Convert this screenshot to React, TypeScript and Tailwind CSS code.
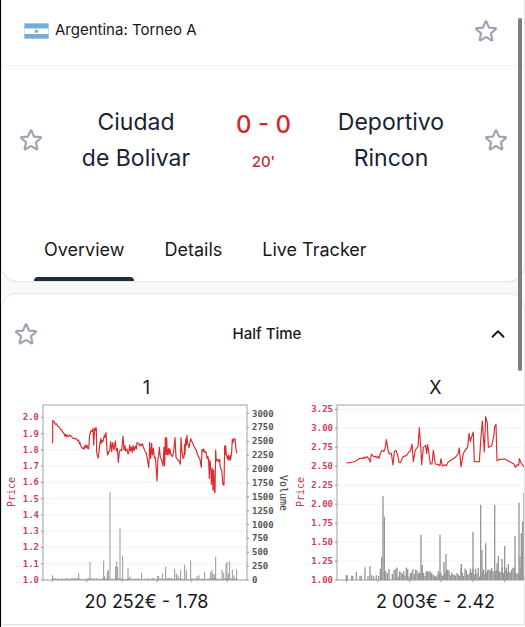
import { useState } from 'react';
import { ChevronUp } from 'lucide-react';

type Market = {
  id: string;
  label: string;
  summary: string;
  plotLeft: number;
  priceTicks: string[];
  volumeTicks: number[];
  priceTop: number;
  priceStep: number;
  timeTicks: number[];
  price: string;
  barWidth: number;
  bars: number[][];
  noise: { from: number; to: number; min: number; max: number; step: number };
};

const PLOT_W = 204;
const PLOT_H = 175;
const PLOT_TOP = 5;

// price and bars are in plot units (612 x 525), price is measured from the top
const markets: Market[] = [
  {
    id: 'home',
    label: '1',
    summary: '20 252€ - 1.78',
    plotLeft: 41,
    priceTicks: ['2.0', '1.9', '1.8', '1.7', '1.6', '1.5', '1.4', '1.3', '1.2', '1.1', '1.0'],
    volumeTicks: [3000, 2750, 2500, 2250, 2000, 1750, 1500, 1250, 1000, 750, 500, 250, 0],
    priceTop: 37,
    priceStep: 48.8,
    timeTicks: [27, 131, 237, 342, 446, 552],
    price:
      '27,115 29,111 29,47 32,48 37,58 40,56 44,63 48,65 52,73 56,74 59,81 63,85 65,93 68,88 70,96 72,90 77,95 80,90 84,93 88,98 92,101 98,100 104,107 107,105 109,117 111,113 114,124 119,131 122,128 124,132 126,120 129,128 132,120 134,130 137,131 140,90 143,80 145,77 147,79 150,70 152,120 155,70 157,76 159,68 160,72 161,140 163,152 166,159 170,120 173,101 175,115 177,106 180,110 184,90 186,97 189,83 192,135 194,150 197,140 200,138 203,110 206,140 209,113 213,135 217,108 220,138 223,130 226,172 229,140 232,135 236,137 240,93 243,135 246,122 248,138 252,132 255,147 258,140 260,120 262,138 265,126 268,142 270,122 273,137 277,123 280,132 282,113 287,115 290,122 292,118 296,122 298,116 301,126 306,138 310,145 314,168 317,187 319,152 320,111 323,160 326,115 328,150 331,130 334,158 337,157 340,193 342,228 345,160 347,150 349,127 352,157 356,165 360,183 363,127 365,183 367,98 369,148 371,98 373,150 377,130 378,150 381,132 383,147 388,155 392,140 396,98 399,157 405,165 408,168 412,178 414,98 417,140 420,160 423,156 425,118 426,148 428,102 430,120 432,91 434,115 438,128 443,101 447,110 450,117 455,128 460,136 464,150 468,158 471,163 475,187 477,133 480,140 482,132 485,142 489,140 492,160 495,155 497,170 499,220 501,165 504,200 505,238 508,190 510,255 512,195 514,258 516,263 518,135 520,168 524,163 527,170 530,163 532,188 536,195 540,240 543,240 545,123 547,148 548,122 550,150 554,162 556,150 558,166 561,152 563,165 566,140 568,102 570,112 573,102 576,101 578,125 580,138 582,145',
    barWidth: 3,
    bars: [
      [29, 14], [107, 21], [141, 54], [182, 58], [185, 12], [193, 25], [196, 30], [201, 264],
      [218, 40], [221, 55], [224, 40], [231, 156], [239, 73], [255, 36], [260, 10], [296, 22],
      [344, 12], [347, 12], [359, 20], [368, 40], [395, 34], [400, 20], [405, 14], [413, 30],
      [425, 46], [430, 30], [443, 58], [462, 12], [468, 14], [485, 25], [503, 25], [507, 30],
      [510, 20], [514, 16], [518, 70], [537, 30], [542, 22], [549, 50], [552, 54], [556, 20],
      [560, 56], [568, 32], [573, 14], [581, 32],
    ],
    noise: { from: 30, to: 584, min: 1, max: 6, step: 3 },
  },
  {
    id: 'draw',
    label: 'X',
    summary: '2 003€ - 2.42',
    plotLeft: 46,
    priceTicks: ['3.25', '3.00', '2.75', '2.50', '2.25', '2.00', '1.75', '1.50', '1.25', '1.00'],
    volumeTicks: [],
    priceTop: 13,
    priceStep: 56.9,
    timeTicks: [28, 122, 218, 312, 408, 503],
    price:
      '28,174 38,173 48,171 58,167 68,160 78,160 82,156 85,160 90,155 96,162 100,171 103,147 107,152 110,155 115,154 118,158 122,154 126,160 132,140 136,136 140,139 144,133 148,104 151,120 153,135 157,147 163,145 168,180 172,140 177,136 182,150 186,172 190,173 194,165 198,155 208,152 216,141 219,140 223,127 225,117 229,170 235,135 243,125 247,68 252,140 254,179 259,127 266,121 269,145 272,119 276,147 280,177 285,177 289,136 295,177 303,179 309,181 312,161 316,183 323,179 328,182 333,172 343,165 355,157 363,147 367,129 372,185 379,145 385,135 392,127 396,85 400,110 404,95 409,81 412,170 427,170 432,95 436,48 439,95 442,141 446,35 451,55 454,127 464,123 471,90 473,65 477,58 480,167 489,163 503,162 518,170 531,177 535,187 541,179 545,181 547,161 553,175 561,185 570,178',
    barWidth: 4,
    bars: [
      [28, 14], [31, 14], [44, 13], [47, 12], [58, 24], [69, 13], [73, 13], [84, 38], [93, 12],
      [99, 42], [104, 14], [110, 12], [118, 14], [125, 12], [130, 34], [134, 68], [138, 252],
      [142, 190], [146, 26], [151, 20], [156, 33], [166, 18], [171, 30], [252, 136], [256, 45],
      [309, 136], [321, 54], [327, 78], [373, 48], [408, 145], [431, 226], [435, 90], [446, 110],
      [473, 226], [480, 50], [484, 72], [495, 64], [503, 102], [514, 48], [534, 132], [546, 232],
      [549, 70], [553, 140], [557, 175], [561, 262],
    ],
    noise: { from: 176, to: 564, min: 10, max: 38, step: 4 },
  },
];

const tabs = ['Overview', 'Details', 'Live Tracker'];

const StarButton = ({ label }: { label: string }) => (
  <button type="button" aria-label={label} className="shrink-0 text-[#9fa3b3]">
    <svg
      viewBox="0 0 24 24"
      className="size-[26px]"
      fill="none"
      stroke="currentColor"
      strokeWidth="2"
      strokeLinecap="round"
      strokeLinejoin="round"
    >
      <path d="M11.48 3.5a.562.562 0 0 1 1.04 0l2.125 5.11a.563.563 0 0 0 .475.345l5.518.442c.499.04.701.663.321.988l-4.204 3.602a.563.563 0 0 0-.182.557l1.285 5.385a.562.562 0 0 1-.84.61l-4.725-2.885a.562.562 0 0 0-.586 0L6.982 20.54a.562.562 0 0 1-.84-.61l1.285-5.386a.562.562 0 0 0-.182-.557l-4.204-3.602a.562.562 0 0 1 .321-.988l5.518-.442a.563.563 0 0 0 .475-.345L11.48 3.5Z" />
    </svg>
  </button>
);

const Flag = () => (
  <svg viewBox="0 0 25 16" className="h-4 w-[25px]" aria-hidden="true">
    <rect width="25" height="16" rx="1" fill="#dcdff0" />
    <rect x="0.5" y="0.5" width="24" height="15" fill="#6fafd8" />
    <rect x="0.5" y="5.5" width="24" height="5.5" fill="#fff" />
    <circle cx="12.5" cy="8.3" r="1.8" fill="#e09a4a" />
  </svg>
);

// small volume bars between the big trades
const noiseBars = ({ from, to, min, max, step }: Market['noise']) => {
  const result: number[][] = [];
  for (let x = from; x < to; x += step) {
    const k = Math.abs(Math.sin(x * 12.9898) * 43758.5453) % 1;
    result.push([x, min + (max - min) * k]);
  }
  return result;
};

const MarketChart = ({ market }: { market: Market }) => {
  const { plotLeft, priceTicks, priceTop, priceStep, volumeTicks, timeTicks } = market;
  const right = plotLeft + PLOT_W;
  const bottom = PLOT_TOP + PLOT_H;
  const bars = [...market.bars, ...noiseBars(market.noise)];

  return (
    <svg viewBox="0 0 289 188" className="block h-[188px] w-[289px]" fontFamily="'DejaVu Sans Mono', monospace">
      {priceTicks.map((tick, i) => {
        const y = PLOT_TOP + (priceTop + priceStep * i) / 3;
        return (
          <g key={tick}>
            <line x1={plotLeft} x2={right} y1={y} y2={y} stroke="#e4e4e4" strokeWidth="0.7" strokeDasharray="2.5 1.5" />
            <line x1={plotLeft - 2} x2={plotLeft} y1={y} y2={y} stroke="#777" strokeWidth="0.8" />
            <text x={plotLeft - 4} y={y + 3} textAnchor="end" fontSize="9" fontWeight="bold" fill="#d0405a">
              {tick}
            </text>
          </g>
        );
      })}
      {volumeTicks.map((tick, i) => {
        const y = bottom - (volumeTicks.length - 1 - i) * 13.87;
        return (
          <g key={tick}>
            <line x1={right} x2={right + 2} y1={y} y2={y} stroke="#777" strokeWidth="0.8" />
            <text x={right + 5} y={y + 3} fontSize="9" fontWeight="bold" fill="#555">
              {tick}
            </text>
          </g>
        );
      })}
      <rect x={plotLeft} y={PLOT_TOP} width={PLOT_W} height={PLOT_H} fill="none" stroke="#8a8a8a" strokeWidth="0.8" />
      <svg x={plotLeft} y={PLOT_TOP} width={PLOT_W} height={PLOT_H + 3} viewBox="0 0 612 534">
        {timeTicks.map(x => (
          <line key={x} x1={x} x2={x} y1="525" y2="532" stroke="#777" strokeWidth="2" />
        ))}
        {bars.map(([x, h], i) => (
          <line key={i} x1={x} x2={x} y1="525" y2={525 - h} stroke="#979797" strokeWidth={market.barWidth} />
        ))}
        <polyline points={market.price} fill="none" stroke="#dc2a2e" strokeWidth="3.5" strokeLinejoin="round" />
      </svg>
      <text transform="translate(13 92) rotate(-90)" textAnchor="middle" fontSize="10" fill="#c9304a">
        Price
      </text>
      {volumeTicks.length > 0 && (
        <text transform={`translate(${right + 33} 93) rotate(90)`} textAnchor="middle" fontSize="10" fill="#333">
          Volume
        </text>
      )}
    </svg>
  );
};

export default function App() {
  const [activeTab, setActiveTab] = useState(tabs[0]);
  const [open, setOpen] = useState(true);

  return (
    <div className="relative min-h-screen overflow-hidden border-l border-black bg-[#f8f9fb] font-[Inter,sans-serif] text-[#17181c]">
      <section className="rounded-b-2xl border-x border-b border-[#e3e4e8] bg-white">
        <header className="flex h-[66px] items-center border-b border-[#f1f1f3] pr-[25px] pb-1 pl-[22px]">
          <Flag />
          <span className="ml-1.5 flex-1 text-[15px]">Argentina: Torneo A</span>
          <StarButton label="Add league to favourites" />
        </header>

        <div className="flex items-center py-[38px] pr-[15px] pl-4 text-[#1a1f36]">
          <StarButton label="Add Ciudad de Bolivar to favourites" />
          <h2 className="flex-1 px-2 text-center text-[23px] leading-9">Ciudad de&nbsp;Bolivar</h2>
          <div className="px-2 text-center font-medium text-[#cf2a2f]">
            <div className="text-2xl leading-9">0 - 0</div>
            <div className="pt-2 text-[15px]">20'</div>
          </div>
          <h2 className="flex-1 px-2 text-center text-[23px] leading-9">Deportivo Rincon</h2>
          <StarButton label="Add Deportivo Rincon to favourites" />
        </div>

        <nav className="flex gap-5 pl-8">
          {tabs.map(tab => (
            <button
              key={tab}
              type="button"
              onClick={() => setActiveTab(tab)}
              className="relative px-2.5 pt-6 pb-[19px] text-lg leading-6"
            >
              {tab}
              {activeTab === tab && <span className="absolute inset-x-0 bottom-0 h-1 rounded-t bg-[#222b3a]" />}
            </button>
          ))}
        </nav>
      </section>

      <section className="mt-[11px] rounded-t-2xl border border-[#e3e4e8] bg-white">
        <header className="flex h-20 items-center pr-[15px] pl-[11px]">
          <StarButton label="Add Half Time to favourites" />
          <h3 className="ml-2 flex-1 text-center text-[15px] font-medium">Half Time</h3>
          <button type="button" aria-label="Toggle Half Time" aria-expanded={open} onClick={() => setOpen(!open)}>
            <ChevronUp size={22} strokeWidth={2} className={open ? '' : 'rotate-180'} />
          </button>
        </header>
        {open && (
          <div className="flex overflow-hidden pb-2">
            {markets.map(market => (
              <article key={market.id} className="flex w-[289px] shrink-0 flex-col items-center text-lg leading-7">
                <h4 className="h-[26px]">{market.label}</h4>
                <MarketChart market={market} />
                <p>{market.summary}</p>
              </article>
            ))}
          </div>
        )}
      </section>

      <div className="absolute top-[18px] right-[3px] h-[353px] w-1 rounded-full bg-[#7d7d7d]" />
    </div>
  );
}
